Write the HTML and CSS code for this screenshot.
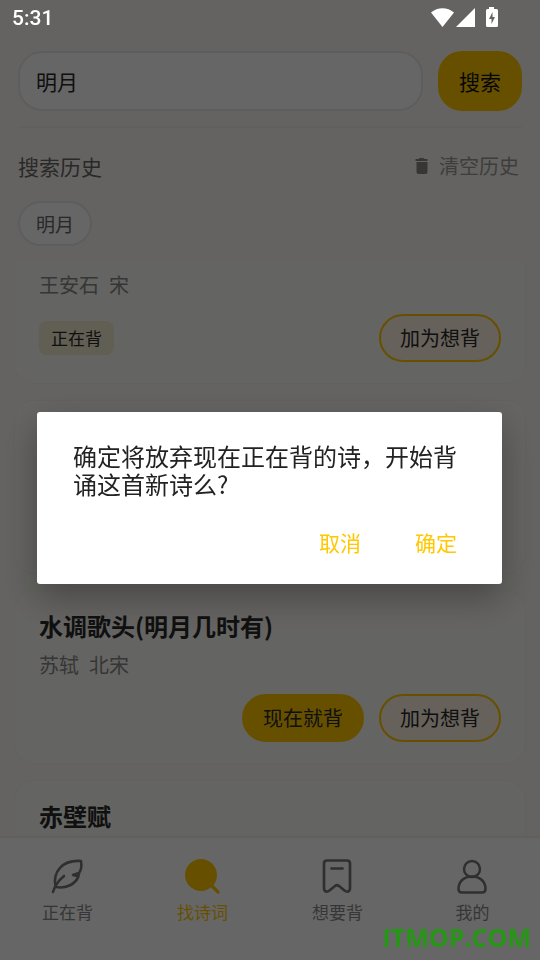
FILE: index.html
```html
<!DOCTYPE html>
<html lang="zh-CN">
<head>
<meta charset="utf-8">
<meta name="viewport" content="width=device-width, initial-scale=1">
<title>找诗词</title>
<link rel="stylesheet" href="styles.css">
</head>
<body>
<header class="status">
  <span class="status-time">5:31</span>
  <svg class="status-icons" width="70" height="22" viewBox="0 0 70 22" aria-hidden="true">
    <path fill="#fff" d="M1 5.6C7.500-.3 17.500-.3 24 5.600L12.500 20z"/>
    <path fill="#fff" d="M45 1v19H26z"/>
    <path fill="#fff" fill-rule="evenodd" d="M59 0h5v2h2.500q1.500 0 1.500 1.500v15q0 1.500-1.500 1.500h-9q-1.500 0-1.500-1.500v-15q0-1.500 1.500-1.500H59zM62.500 5 59 12h2.500v5l3.500-7h-2.500z"/>
  </svg>
</header>

<form class="search">
  <input class="search-field" type="text" value="明月" aria-label="搜索">
  <button class="search-button" type="button">搜索</button>
</form>

<section class="history">
  <div class="history-head">
    <h2 class="history-title">搜索历史</h2>
    <button class="clear" type="button">
      <svg class="clear-icon" width="14" height="18" viewBox="0 0 14 18" aria-hidden="true"><path fill="currentColor" d="M.5 2h3l1-1h4l1 1h3v2H.5zM1.500 5h11v10q0 2-2 2h-7q-2 0-2-2z"/></svg>
      清空历史
    </button>
  </div>
  <button class="chip" type="button">明月</button>
</section>

<main class="results">
  <article class="card card-first">
    <p class="author"><span>王安石</span><span>宋</span></p>
    <div class="actions">
      <span class="tag">正在背</span>
      <button class="pill pill-outline" type="button">加为想背</button>
    </div>
  </article>
  <article class="card"></article>
  <article class="card">
    <h3 class="poem">水调歌头(明月几时有)</h3>
    <p class="author"><span>苏轼</span><span>北宋</span></p>
    <div class="actions">
      <button class="pill" type="button">现在就背</button>
      <button class="pill pill-outline" type="button">加为想背</button>
    </div>
  </article>
  <article class="card">
    <h3 class="poem">赤壁赋</h3>
  </article>
</main>

<nav class="tabs">
  <a class="tab" href="#reciting">
    <svg class="tab-icon" width="36" height="36" viewBox="1 0 36 36" fill="none" stroke="currentColor" stroke-width="2.600" stroke-linecap="round" stroke-linejoin="round" aria-hidden="true">
      <path d="M4 34C5.500 28.500 9 23 15 18"/><path d="M6.500 29C3.500 14 13 1.500 32 3C33 9 31.500 13 30 15L24 17L29.500 18C27 26 17 31 7 29"/><path d="M25 17l5-1.500-1 2.500z" fill="currentColor"/>
    </svg>
    <span>正在背</span>
  </a>
  <a class="tab tab-active" href="#search">
    <svg class="tab-icon" width="36" height="36" viewBox="1 0 36 36" aria-hidden="true">
      <circle cx="17" cy="17" r="16" fill="currentColor"/><path d="M27 27l7 7" stroke="currentColor" stroke-width="3.200" stroke-linecap="round"/>
    </svg>
    <span>找诗词</span>
  </a>
  <a class="tab" href="#wanted">
    <svg class="tab-icon" width="36" height="36" viewBox="1 0 36 36" fill="none" stroke="currentColor" stroke-width="2.700" stroke-linecap="round" stroke-linejoin="round" aria-hidden="true">
      <path d="M8 2.500h20q3 0 3 3v24.500c0 4-3 4.500-5.500 2.500L20 28q-2-1.500-4 0l-5.500 4.500C8 34.500 5 34 5 30V5.500q0-3 3-3z"/><path d="M12.500 10.500h11"/>
    </svg>
    <span>想要背</span>
  </a>
  <a class="tab" href="#me">
    <svg class="tab-icon" width="36" height="36" viewBox="1 0 36 36" fill="none" stroke="currentColor" stroke-width="2.500" stroke-linejoin="round" aria-hidden="true">
      <circle cx="18" cy="11" r="8"/><path d="M8 34.500h20q3.500 0 3.500-3.500C31.500 23 25.500 18.500 18 18.500S4.500 23 4.500 31Q4.500 34.500 8 34.500z"/>
    </svg>
    <span>我的</span>
  </a>
</nav>

<div class="scrim">
  <div class="dialog" role="alertdialog" aria-modal="true" aria-labelledby="message">
    <p class="message" id="message">确定将放弃现在正在背的诗，开始背诵这首新诗么?</p>
    <div class="dialog-actions">
      <button class="dialog-button" type="button">取消</button>
      <button class="dialog-button" type="button">确定</button>
    </div>
  </div>
</div>
<div class="watermark">ITMOP.COM</div>
</body>
</html>
```
FILE: styles.css
```css
* {
  box-sizing: border-box;
}

body {
  display: flex;
  flex-direction: column;
  height: 100vh;
  margin: 0;
  overflow: hidden;
  background: #faf8f2;
  color: #292929;
  font-family: "Noto Sans CJK SC", sans-serif;
  font-size: 20px;
  line-height: 28px;
}

button,
input {
  margin: 0;
  padding: 0;
  border: 0;
  background: none;
  color: inherit;
  font: inherit;
}

h2,
h3,
p {
  margin: 0;
}

.status {
  position: relative;
  z-index: 3;
  display: flex;
  flex: none;
  align-items: center;
  justify-content: space-between;
  height: 36px;
  padding: 0 40px 0 12px;
  color: #fff;
  font-family: Roboto, sans-serif;
  font-size: 21px;
  font-weight: 500;
}

.search {
  display: flex;
  flex: none;
  gap: 15px;
  margin: 0 18px;
  padding: 15px 0;
  border-bottom: 2px solid #f0efec;
  font-size: 21px;
}

.search-field {
  flex: 1;
  min-width: 0;
  height: 60px;
  padding: 0 16px;
  border: 2px solid #e9e9e9;
  border-radius: 24px;
  background: #fff;
}

.search-button {
  width: 84px;
  height: 60px;
  border-radius: 24px;
  background: #ffc800;
  color: #111;
}

.history {
  flex: none;
  padding: 24px 18px 16px;
}

.history-head {
  display: flex;
  align-items: center;
  justify-content: space-between;
  margin-bottom: 21px;
  padding-right: 3px;
}

.history-title {
  color: #666;
  font-size: 21px;
  font-weight: 400;
}

.clear {
  display: flex;
  align-items: center;
  gap: 10px;
  color: #999;
}

.clear-icon {
  color: #888;
}

.chip {
  height: 45px;
  padding: 0 16px;
  border: 2px solid #e9e9e9;
  border-radius: 24px;
  background: #fff;
  color: #666;
  font-size: 19px;
}

.results {
  display: flex;
  flex: 1;
  flex-direction: column;
  gap: 16px;
  min-height: 0;
  padding: 0 14px;
  overflow: hidden;
}

.card {
  display: flex;
  flex: none;
  flex-direction: column;
  min-height: 174px;
  padding: 21px 24px;
  border: 1px solid #f5f3ee;
  border-radius: 20px;
  background: #fbf9f4;
}

.card-first {
  min-height: 0;
  padding-top: 9px;
  border-top: 0;
  border-radius: 0 0 20px 20px;
}

.poem {
  margin-bottom: 11px;
  color: #292929;
  font-size: 24px;
  font-weight: 700;
}

.author {
  display: flex;
  gap: 10px;
  color: #888;
}

.actions {
  display: flex;
  align-items: center;
  justify-content: flex-end;
  gap: 15px;
  margin-top: 15px;
}

.tag {
  margin-right: auto;
  padding: 3px 12px;
  border-radius: 8px;
  background: #f3edd0;
  font-size: 17px;
}

.pill {
  width: 122px;
  height: 48px;
  border: 2px solid #ffc800;
  border-radius: 24px;
  background: #ffc800;
}

.pill-outline {
  background: #fff3e0;
}

.tabs {
  position: relative;
  display: flex;
  flex: none;
  height: 122px;
  padding-top: 20px;
  background: #fff;
  box-shadow: 0 -1px 3px rgba(0, 0, 0, 0.08);
}

.tab {
  display: flex;
  flex: 1;
  flex-direction: column;
  align-items: center;
  gap: 5px;
  color: #888;
  font-size: 17px;
  line-height: 26px;
  text-decoration: none;
}

.tab-icon {
  color: #777;
}

.tab-active,
.tab-active .tab-icon {
  color: #ffc800;
}

.scrim {
  position: fixed;
  inset: 0;
  z-index: 2;
  display: flex;
  align-items: center;
  padding: 36px 38px 0 37px;
  background: rgba(0, 0, 0, 0.6);
}

.dialog {
  width: 100%;
  padding: 30px 36px 28px;
  border-radius: 3px;
  background: #fff;
  box-shadow: 0 14px 36px rgba(0, 0, 0, 0.3);
}

.message {
  color: #222;
  font-size: 24px;
}

.dialog-actions {
  display: flex;
  justify-content: flex-end;
  gap: 54px;
  margin-top: 30px;
  padding-right: 9px;
}

.dialog-button {
  color: #ffc800;
  font-size: 21px;
}

.watermark {
  position: fixed;
  right: 9px;
  bottom: 12px;
  z-index: 4;
  color: #269715;
  font-family: "Open Sans", sans-serif;
  font-size: 25px;
  font-weight: 700;
  line-height: 22px;
}
```
